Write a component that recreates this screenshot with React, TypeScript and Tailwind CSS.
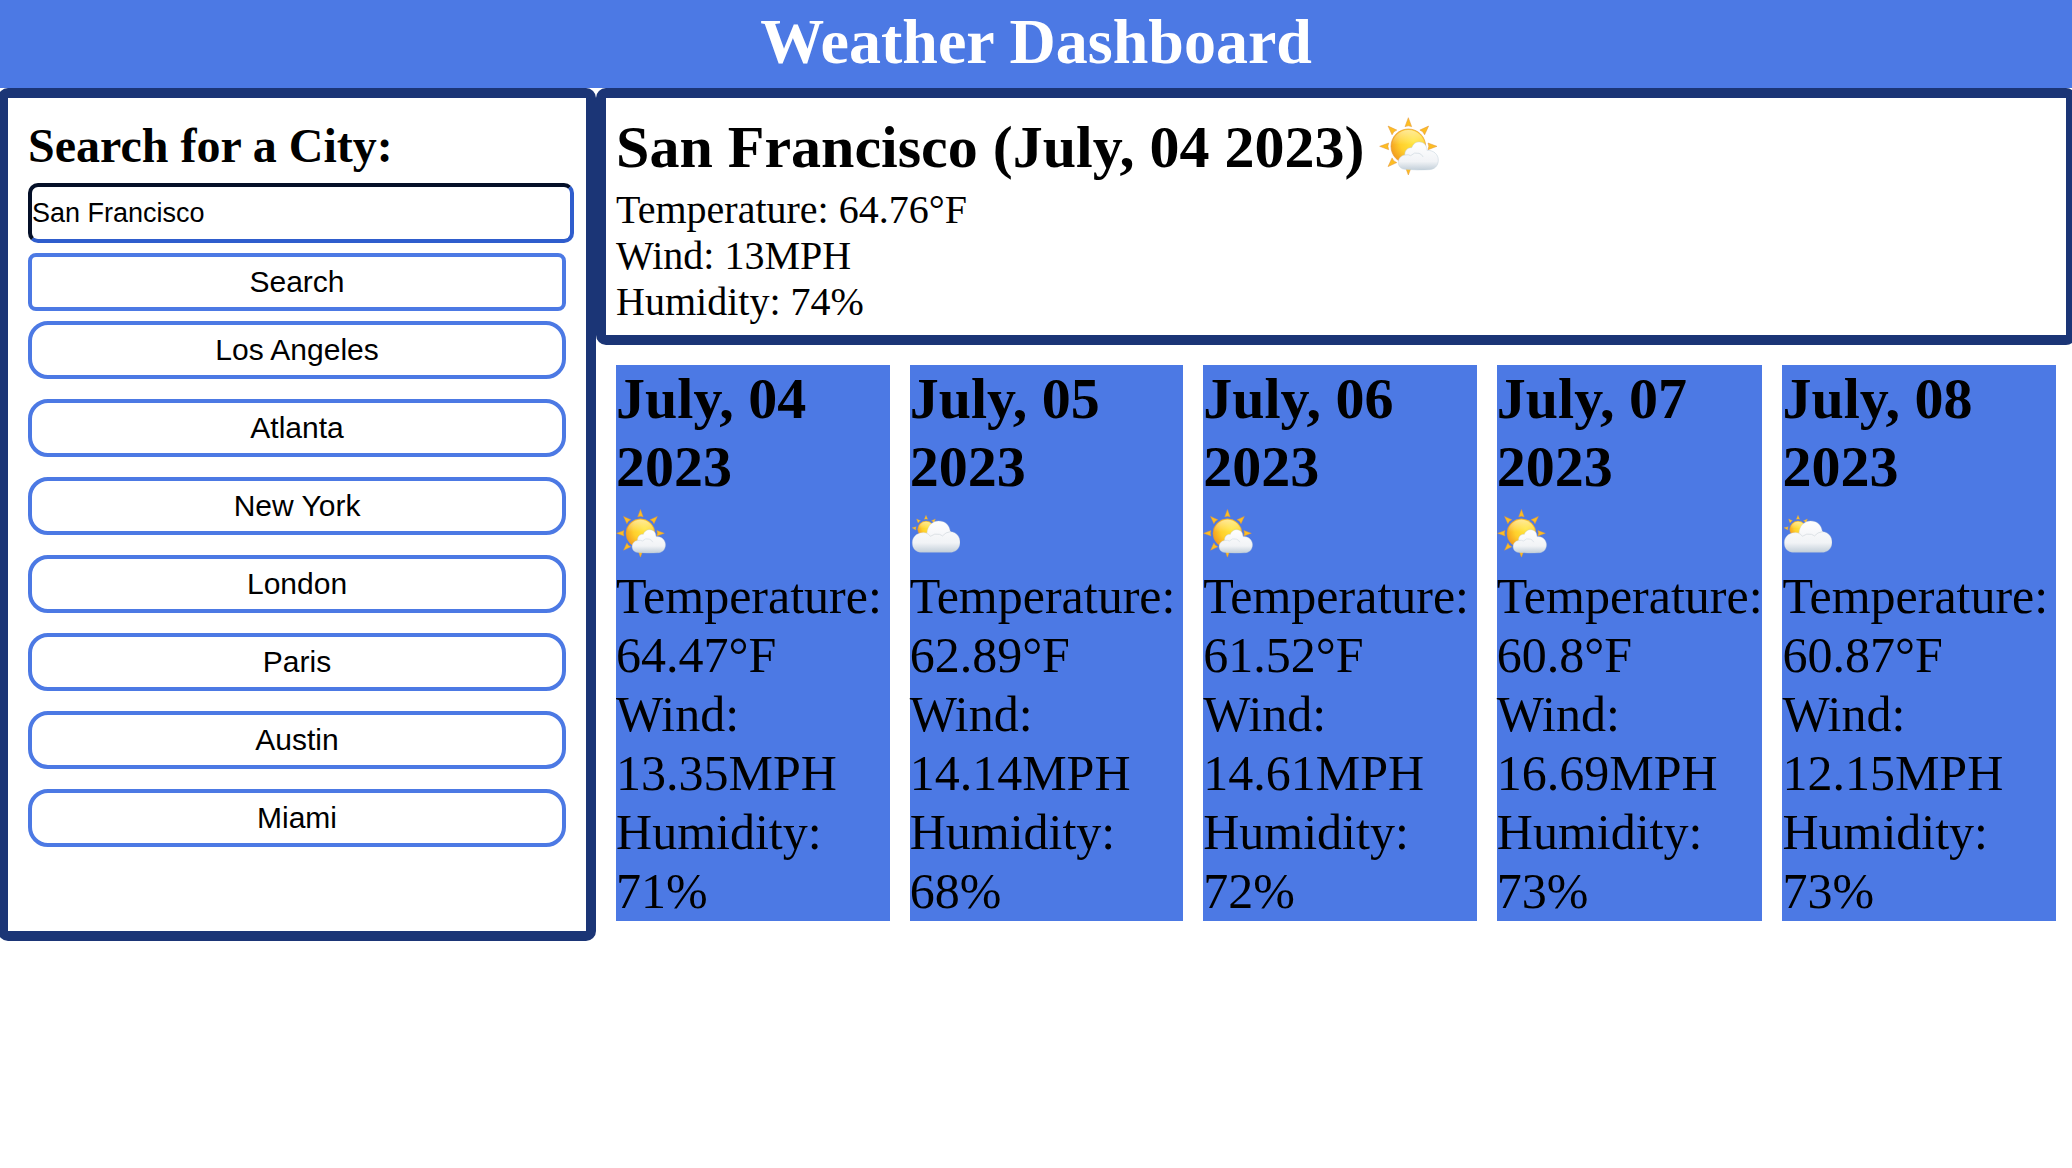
import { useState } from "react";

type Sky = "sunny" | "cloudy";

const cities = ["Los Angeles", "Atlanta", "New York", "London", "Paris", "Austin", "Miami"];

const forecast: { date: string; sky: Sky; temp: string; wind: string; humidity: string }[] = [
  { date: "July, 04 2023", sky: "sunny", temp: "64.47", wind: "13.35", humidity: "71" },
  { date: "July, 05 2023", sky: "cloudy", temp: "62.89", wind: "14.14", humidity: "68" },
  { date: "July, 06 2023", sky: "sunny", temp: "61.52", wind: "14.61", humidity: "72" },
  { date: "July, 07 2023", sky: "sunny", temp: "60.8", wind: "16.69", humidity: "73" },
  { date: "July, 08 2023", sky: "cloudy", temp: "60.87", wind: "12.15", humidity: "73" },
];

function Gradients({ id }: { id: string }) {
  return (
    <defs>
      <radialGradient id={id + "-sun"} cx="0.65" cy="0.35" r="0.72">
        <stop offset="0" stopColor="#ffe640" />
        <stop offset="0.55" stopColor="#ffd02c" />
        <stop offset="1" stopColor="#f29a1e" />
      </radialGradient>
      <linearGradient id={id + "-shine"} x1="0" y1="0" x2="0" y2="1">
        <stop offset="0" stopColor="#ffffff" stopOpacity="0.5" />
        <stop offset="0.45" stopColor="#ffffff" stopOpacity="0" />
      </linearGradient>
      <linearGradient id={id + "-cloud"} x1="0" y1="0" x2="0" y2="1">
        <stop offset="0" stopColor="#ffffff" />
        <stop offset="0.7" stopColor="#f1f3f6" />
        <stop offset="1" stopColor="#c3cfd9" />
      </linearGradient>
    </defs>
  );
}

function SunnyIcon({ id, className }: { id: string; className: string }) {
  return (
    <svg viewBox="0 0 180 180" className={className} role="img" aria-label="Mostly sunny">
      <Gradients id={id} />
      <g fill="#fdbd22" stroke="#e3973a" strokeWidth="1.5" strokeLinejoin="round">
        {[0, 45, 90, 135, 180, 225, 270, 315].map((a) => (
          <path key={a} d="M88 5 L98 32 Q88 27 78 32 Z" transform={`rotate(${a} 88 91)`} />
        ))}
      </g>
      <circle cx="88" cy="91" r="52" fill={`url(#${id}-sun)`} stroke="#e3973a" strokeWidth="2" />
      <circle cx="88" cy="91" r="49" fill={`url(#${id}-shine)`} />
      <path
        d="M80 160 C66 160 58 151 58 139 C58 127 67 118 78 117 C76 104 86 94 98 95 C103 82 113 77 122 78 C136 79 144 89 144 103 C163 102 178 115 178 132 C178 150 166 161 149 161 Q115 163 80 160 Z"
        fill={`url(#${id}-cloud)`}
        stroke="#c3d0da"
        strokeWidth="1.5"
      />
      <path d="M78 117 Q89 114 95 119 Q106 107 120 112 Q129 115 132 122" fill="none" stroke="#dbe2e8" strokeWidth="3" strokeLinecap="round" />
    </svg>
  );
}

function CloudyIcon({ id, className }: { id: string; className: string }) {
  return (
    <svg viewBox="0 0 150 150" className={className} role="img" aria-label="Mostly cloudy">
      <Gradients id={id} />
      <g fill="#fdc62c" stroke="#dd9c45" strokeWidth="1">
        {[-84, -42, 0, 42].map((a) => (
          <path key={a} d="M48 22 L53 34 Q48 32 43 34 Z" transform={`rotate(${a} 48 64)`} />
        ))}
      </g>
      <circle cx="48" cy="64" r="25" fill={`url(#${id}-sun)`} stroke="#dd9c45" strokeWidth="1" />
      <circle cx="48" cy="64" r="23" fill={`url(#${id}-shine)`} />
      <path
        d="M37 133 C17 133 7 121 7 104 C7 87 20 75 36 74 Q43 73 51 76 C52 53 68 39 86 39 C105 39 118 50 121 71 C139 72 150 85 150 102 C150 121 138 133 119 133 Z"
        fill={`url(#${id}-cloud)`}
        stroke="#c9d1d8"
        strokeWidth="1"
      />
      <path d="M51 76 Q58 79 61 85 Q74 75 88 79 Q94 81 97 84 Q107 72 121 71" fill="none" stroke="#dde2e6" strokeWidth="3" strokeLinecap="round" />
    </svg>
  );
}

export default function App() {
  const [city, setCity] = useState("San Francisco");

  return (
    <div className="min-h-screen overflow-hidden bg-white font-['Liberation_Serif',serif] text-black">
      <header className="bg-[#4c79e4] pt-[5px] pb-[9px] text-center text-white">
        <h1 className="text-[64px] leading-[74px] font-bold">Weather Dashboard</h1>
      </header>

      <main className="-mr-1 -ml-0.5 flex items-stretch">
        <aside className="w-[28.78%] shrink-0 rounded-[10px] border-[10px] border-[#1b3576] p-5">
          <form onSubmit={(e) => e.preventDefault()}>
            <label htmlFor="city" className="block text-5xl leading-[55px] font-bold">
              Search for a City:
            </label>
            <input
              id="city"
              type="text"
              value={city}
              onChange={(e) => setCity(e.target.value)}
              className="mt-2.5 block h-[60px] w-[calc(100%+8px)] rounded-[10px] border-4 border-t-[#040f28] border-r-[#2f5dcd] border-b-[#2f5dcd] border-l-[#040f28] bg-white font-['Liberation_Sans',sans-serif] text-[27px] outline-none"
            />
            <button
              type="submit"
              className="mt-2.5 block h-[58px] w-full rounded-lg border-4 border-[#4c79e4] bg-white font-['Liberation_Sans',sans-serif] text-[30px] leading-none"
            >
              Search
            </button>
          </form>
          <div className="mt-2.5 flex flex-col gap-5">
            {cities.map((name) => (
              <button
                key={name}
                type="button"
                onClick={() => setCity(name)}
                className="h-[58px] w-full rounded-[20px] border-4 border-[#4c79e4] bg-white font-['Liberation_Sans',sans-serif] text-[30px] leading-none"
              >
                {name}
              </button>
            ))}
          </div>
        </aside>

        <div className="flex min-w-0 flex-1 flex-col">
          <section className="rounded-[10px] border-[10px] border-[#1b3576] p-2.5 text-[40px] leading-[46px]">
            <div className="flex h-[79px] items-center gap-[15px]">
              <h2 className="text-[60px] leading-[69px] font-bold">San Francisco (July, 04 2023)</h2>
              <SunnyIcon id="today" className="mb-1 size-[60px]" />
            </div>
            <p>Temperature: 64.76°F</p>
            <p>Wind: 13MPH</p>
            <p>Humidity: 74%</p>
          </section>

          <section className="grid grid-cols-[274fr_274fr_274fr_266fr_274fr] gap-5 p-5">
            {forecast.map((day, i) => (
              <article key={day.date} className="min-w-0 bg-[#4c79e4] text-[50px] leading-[59px]">
                <h3 className="text-[58px] leading-[68px] font-bold">{day.date}</h3>
                <div className="flex h-[66px] items-center pb-0.5">
                  {day.sky === "sunny" ? (
                    <SunnyIcon id={"day" + i} className="size-[50px]" />
                  ) : (
                    <CloudyIcon id={"day" + i} className="size-[50px]" />
                  )}
                </div>
                <p>Temperature: {day.temp}°F</p>
                <p>Wind: {day.wind}MPH</p>
                <p>Humidity: {day.humidity}%</p>
              </article>
            ))}
          </section>
        </div>
      </main>
    </div>
  );
}
